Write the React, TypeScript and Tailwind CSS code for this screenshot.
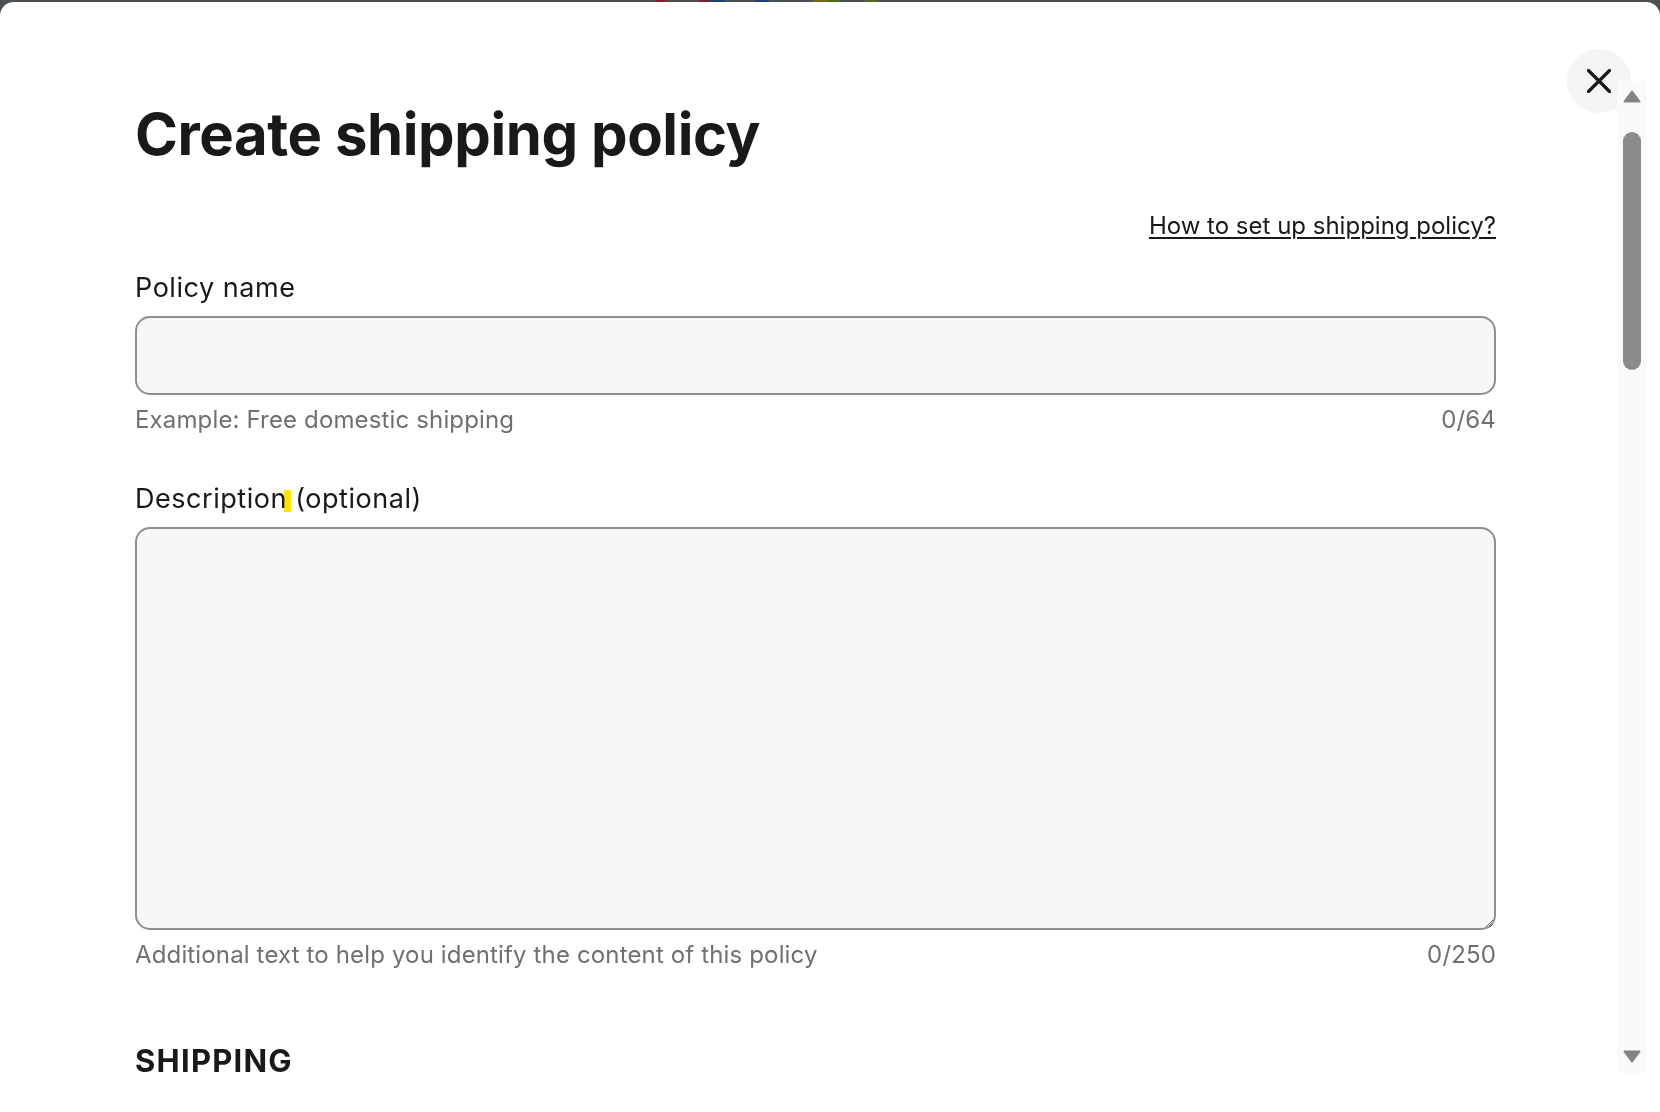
import React from 'react';

export default function App() {
  return (
    <div className="h-screen w-full overflow-hidden bg-[#4b5055] flex flex-col font-[Inter,'Liberation_Sans',sans-serif] text-[#191919]">
      {/* backdrop strip peeking above the sheet */}
      <div className="h-[2px] flex shrink-0">
        <span className="ml-[655px] w-[12px] bg-[#7c2230]" />
        <span className="ml-[31px] w-[12px] bg-[#7c2230]" />
        <span className="w-[15px] bg-[#1f3f78]" />
        <span className="ml-[30px] w-[14px] bg-[#1f3f78]" />
        <span className="ml-[44px] w-[14px] bg-[#7a6616]" />
        <span className="w-[13px] bg-[#4e6a1c]" />
        <span className="ml-[25px] w-[13px] bg-[#4e6a1c]" />
      </div>

      <div className="relative flex-1 flex bg-white rounded-t-[14px]">
        {/* Content */}
        <div className="w-[1617px] shrink-0 pl-[135px]">
          <div className="w-[1361px]">
            <h1 className="mt-[103px] text-[58px] leading-none font-bold tracking-[-0.007em]">
              Create shipping policy
            </h1>

            <div className="mt-[48px] flex justify-end">
              <a href="#" className="text-[24px] leading-[30px] underline underline-offset-[3px] decoration-[1.5px]">
                How to set up shipping policy?
              </a>
            </div>

            <label className="mt-[32px] block text-[27px] leading-[30px] tracking-[0.02em]">Policy name</label>
            <input
              type="text"
              className="mt-[13px] block w-full h-[79px] rounded-[15px] border-2 border-[#8f8f8f] bg-[#f7f7f7] px-4 text-[25px] outline-none"
            />
            <div className="mt-[11px] flex justify-between text-[24px] leading-[28px] tracking-[0.006em] text-[#707070]">
              <span>Example: Free domestic shipping</span>
              <span>0/64</span>
            </div>

            <label className="mt-[50px] block text-[27px] leading-[30px] tracking-[0.02em]">
              Descriptio
              <span className="relative">
                n
                <span className="absolute right-[-4px] top-[8px] w-[7px] h-[22px] bg-[#ffe600] mix-blend-multiply" />
              </span>{' '}
              (optional)
            </label>
            <textarea className="mt-[13px] block w-full h-[403px] rounded-[15px] border-2 border-[#8f8f8f] bg-[#f7f7f7] p-4 text-[25px] outline-none" />
            <div className="mt-[11px] flex justify-between text-[24px] leading-[28px] tracking-[0.006em] text-[#707070]">
              <span>Additional text to help you identify the content of this policy</span>
              <span>0/250</span>
            </div>

            <h2 className="mt-[74px] text-[31px] leading-[36px] font-bold tracking-[0.04em]">SHIPPING</h2>
          </div>
        </div>

        {/* Close button */}
        <button className="absolute left-[1567px] top-[47px] w-[64px] h-[64px] rounded-full bg-[#f5f5f5] flex items-center justify-center">
          <svg width="24" height="24" viewBox="0 0 24 24" fill="none">
            <path d="M1.5 1.5L22.5 22.5M22.5 1.5L1.5 22.5" stroke="#191919" strokeWidth="3.2" strokeLinecap="round" />
          </svg>
        </button>

        {/* Scrollbar */}
        <div className="relative z-10 mt-[79px] w-[30px] h-[992px] bg-[#fafafa] flex flex-col items-center">
          <svg className="mt-[9px]" width="18" height="13" viewBox="0 0 18 13">
            <polygon points="9,1.5 16.5,11.5 1.5,11.5" fill="#838383" stroke="#838383" strokeWidth="2" strokeLinejoin="round" />
          </svg>
          <div className="mt-[29px] w-[18px] h-[238px] rounded-full bg-[#8b8b8b]" />
          <div className="flex-1" />
          <svg className="mb-[10px]" width="18" height="13" viewBox="0 0 18 13">
            <polygon points="1.5,1.5 16.5,1.5 9,11.5" fill="#838383" stroke="#838383" strokeWidth="2" strokeLinejoin="round" />
          </svg>
        </div>
      </div>
    </div>
  );
}
